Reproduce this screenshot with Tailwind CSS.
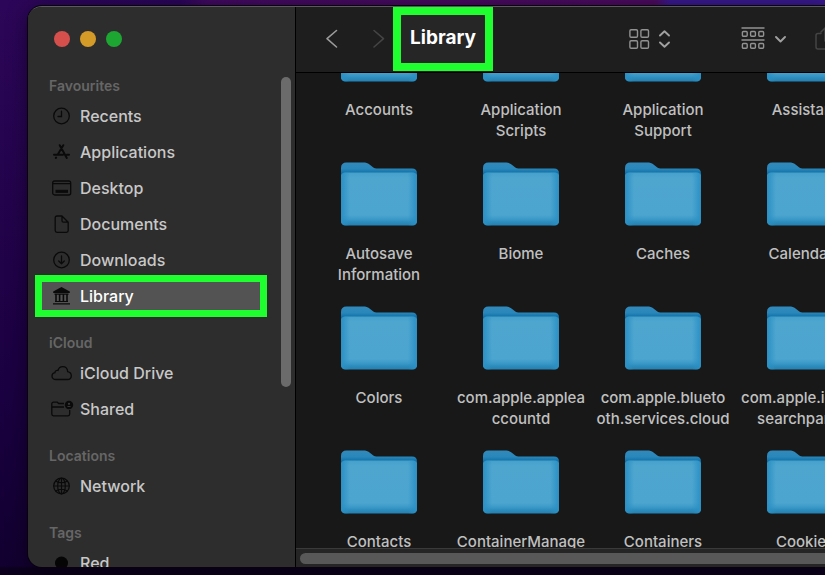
<!DOCTYPE html>
<html lang="en-GB">
<head>
<meta charset="utf-8">
<title>Library</title>
<script src="https://cdn.jsdelivr.net/npm/@tailwindcss/browser@4"></script>
</head>
<body class="h-screen overflow-hidden bg-[#0d0020] font-['Inter','Liberation_Sans',sans-serif]">
<svg class="absolute size-0" aria-hidden="true">
  <defs>
    <linearGradient id="back" x1="0" y1="0" x2="0" y2="1"><stop offset="0" stop-color="#3189bb"/><stop offset=".1" stop-color="#2a87ba"/><stop offset=".17" stop-color="#0f6fa8"/></linearGradient>
    <linearGradient id="front" x1="0" y1="0" x2="0" y2="1"><stop offset="0" stop-color="#45a0ca"/><stop offset=".1" stop-color="#4ea6cf"/><stop offset=".8" stop-color="#4ca5cf"/><stop offset=".88" stop-color="#3c9ac8"/><stop offset=".93" stop-color="#2e8dbd"/><stop offset="1" stop-color="#2380b0"/></linearGradient>
    <linearGradient id="sides" x1="0" y1="0" x2="1" y2="0"><stop offset="0" stop-color="#2a90c4"/><stop offset=".12" stop-color="#2a90c4" stop-opacity="0"/><stop offset=".88" stop-color="#2a90c4" stop-opacity="0"/><stop offset="1" stop-color="#2a90c4"/></linearGradient>
    <symbol id="folder" viewBox="0 0 76 64">
      <path fill="url(#back)" d="M0 6Q0 .5 5.500 .5H22C25 .5 26.500 1 28.500 2.500L32 5.200C33.500 6.300 34.500 6.500 36.500 6.500H71Q76 6.500 76 11.500V58Q76 63 71 63H5Q0 63 0 58Z"/>
      <path fill="url(#front)" d="M0 15Q0 10.500 5 10.500H71Q76 10.500 76 15V58.500Q76 63.500 71 63.500H5Q0 63.500 0 58.500Z"/>
      <path fill="url(#sides)" d="M0 15Q0 10.500 5 10.500H71Q76 10.500 76 15V58.500Q76 63.500 71 63.500H5Q0 63.500 0 58.500Z"/>
    </symbol>
  </defs>
</svg>
<div class="flex h-screen flex-col bg-[linear-gradient(to_right,#2c0658,#2a0558_180px,#40095f_210px,#4a0a5c_655px,#37188a_670px,#37188a)]">
<div class="flex min-h-0 flex-1 flex-col bg-[linear-gradient(to_bottom,transparent_6px,#1a0040_400px,#120030_566px,#0c001e_568px)] pt-[6px] pb-2 pl-7">
<div class="flex min-h-0 flex-1 overflow-hidden rounded-l-[14px] border-t border-[#5a5a5a] bg-[#181818] shadow-[0_0_0_1px_#0a0010,0_4px_20px_rgba(0,0,0,0.5)]">
  <aside class="flex w-[268px] shrink-0 flex-col border-r border-black bg-[#2d2d2d]">
    <div class="flex shrink-0 gap-[10px] pt-6 pl-[26px]">
      <button class="size-4 rounded-full bg-[#d5504c]" aria-label="Close"></button>
      <button class="size-4 rounded-full bg-[#d59b28]" aria-label="Minimise"></button>
      <button class="size-4 rounded-full bg-[#1ea633]" aria-label="Zoom"></button>
    </div>
    <div class="relative mt-[27px] min-h-0 flex-1">
      <nav class="flex h-full flex-col gap-[17px] overflow-hidden pr-[35px] pl-[14px] text-base font-medium text-[#c8c8c8]">
        <section>
          <h2 class="pl-[7px] text-sm leading-6 font-semibold text-[#666]">Favourites</h2>
          <ul>
            <li class="py-1"><a href="#" class="flex h-7 items-center gap-2 pl-2"><svg class="h-5 w-[22px]" viewBox="0 0 22 20" fill="none" stroke="#0a0a0a" stroke-width="1.300" stroke-linecap="round"><circle cx="11.500" cy="10" r="7.800"/><path d="M11.500 5.200V10.500H8"/></svg>Recents</a></li>
            <li class="py-1"><a href="#" class="flex h-7 items-center gap-2 pl-2"><svg class="h-5 w-[22px]" viewBox="0 0 22 20" fill="none" stroke="#0a0a0a" stroke-width="2" stroke-linecap="round"><path d="M9.700 3.200L16.800 16M13.300 3.200L7.600 12.700M4 12.700H13M17 12.700H19M6.100 15.500L5.800 16"/></svg>Applications</a></li>
            <li class="py-1"><a href="#" class="flex h-7 items-center gap-2 pl-2"><svg class="h-5 w-[22px]" viewBox="0 0 22 20" fill="none" stroke="#0a0a0a" stroke-width="1.300"><rect x="2.700" y="3" width="18" height="14" rx="2"/><path d="M3 5.700H20.500"/><rect x="6" y="12.300" width="11.500" height="2" fill="#0a0a0a" stroke-width="1"/></svg>Desktop</a></li>
            <li class="py-1"><a href="#" class="flex h-7 items-center gap-2 pl-2"><svg class="h-5 w-[22px]" viewBox="0 0 22 20" fill="none" stroke="#0a0a0a" stroke-width="1.300" stroke-linejoin="round"><path d="M7 2H12L18.200 8.200V16.500Q18.200 18.300 16.400 18.300H7Q5.200 18.300 5.200 16.500V3.800Q5.200 2 7 2ZM12 2V6.700Q12 8.200 13.500 8.200H18.200"/></svg>Documents</a></li>
            <li class="py-1"><a href="#" class="flex h-7 items-center gap-2 pl-2"><svg class="h-5 w-[22px]" viewBox="0 0 22 20" fill="none" stroke="#0a0a0a" stroke-width="1.300" stroke-linecap="round" stroke-linejoin="round"><circle cx="11.500" cy="10" r="7.800"/><path d="M11.500 6V13.700M8.700 11L11.500 13.800L14.300 11"/></svg>Downloads</a></li>
            <li class="py-1"><a href="#" aria-current="page" class="flex h-7 items-center gap-2 bg-[#535353] pl-2 text-white outline-[7px] outline-[#1fff30] outline-solid"><svg class="h-5 w-[22px]" viewBox="0 0 22 20" fill="none" stroke="#0a0a0a" stroke-width="1.200"><path fill="#0a0a0a" stroke="none" d="M11.500 1L19.800 5.500V7H3.200V5.500Z"/><path d="M4.500 8.200H18.500M5 15.500H18M3 17.800H20"/><path stroke-width="1.600" d="M6 8V15.500M9.600 8V15.500M13.400 8V15.500M17 8V15.500"/></svg>Library</a></li>
          </ul>
        </section>
        <section>
          <h2 class="pl-[7px] text-sm leading-6 font-semibold text-[#666]">iCloud</h2>
          <ul>
            <li class="py-1"><a href="#" class="flex h-7 items-center gap-2 pl-2"><svg class="h-5 w-[22px]" viewBox="0 0 22 20" fill="none" stroke="#0a0a0a" stroke-width="1.300"><path d="M6 16.500C3.500 16.500 2 15 2 13C2 11 3.300 9.900 5 9.700C5 8 6.500 7 8 7.500C8.700 5 10.500 3.700 12.700 3.700C15.500 3.700 17.500 5.800 17.700 8.700C20 9.200 21.300 10.700 21.300 12.700C21.300 15 19.600 16.500 17.500 16.500Z"/></svg>iCloud Drive</a></li>
            <li class="py-1"><a href="#" class="flex h-7 items-center gap-2 pl-2"><svg class="h-5 w-[22px] overflow-visible" viewBox="0 0 22 20" fill="none" stroke="#0a0a0a" stroke-width="1.300"><path d="M14 4.500H8.700L7.300 3.200H3.500Q1.800 3.200 1.800 4.800V15Q1.800 16.800 3.500 16.800H18Q19.700 16.800 19.700 15V11M2 8H14"/><circle cx="19" cy="6" r="4.200" fill="#0a0a0a" stroke="none"/><circle cx="19" cy="4.800" r="1.100" fill="#3a3a3a" stroke="none"/><path d="M16.800 8Q19 5.800 21.200 8Z" fill="#3a3a3a" stroke="none"/></svg>Shared</a></li>
          </ul>
        </section>
        <section>
          <h2 class="pl-[7px] text-sm leading-6 font-semibold text-[#666]">Locations</h2>
          <ul>
            <li class="py-1"><a href="#" class="flex h-7 items-center gap-2 pl-2"><svg class="h-5 w-[22px]" viewBox="0 0 22 20" fill="none" stroke="#0a0a0a" stroke-width="1.200"><circle cx="11.500" cy="10" r="7.800"/><ellipse cx="11.500" cy="10" rx="3.800" ry="7.800"/><path d="M11.500 2V18M3.700 10H19.300M5.500 5Q11.500 8.500 17.500 5M5.500 15Q11.500 11.500 17.500 15"/></svg>Network</a></li>
          </ul>
        </section>
        <section>
          <h2 class="pl-[7px] text-sm leading-6 font-semibold text-[#666]">Tags</h2>
          <ul>
            <li class="py-1"><a href="#" class="flex h-7 items-center gap-2 pl-2"><svg class="h-5 w-[22px]" viewBox="0 0 22 20"><circle cx="11.500" cy="10" r="6.500" fill="#050505"/></svg>Red</a></li>
          </ul>
        </section>
      </nav>
      <div class="absolute top-[3px] right-1 h-[310px] w-[10px] rounded-full bg-[#6b6b6b]"></div>
    </div>
  </aside>
  <main class="flex min-w-0 flex-1 flex-col">
    <header class="flex h-[66px] shrink-0 items-center overflow-hidden border-b border-black bg-[#1e1e1e] pb-[2px]">
      <button class="ml-[28px] shrink-0" aria-label="Back"><svg class="h-5 w-4" viewBox="0 0 16 20" fill="none" stroke="#9a9a9a" stroke-width="1.600" stroke-linecap="round" stroke-linejoin="round"><path d="M12.500 1.500L3 9.700L12.500 18"/></svg></button>
      <button class="ml-[30px] shrink-0" aria-label="Forward" disabled><svg class="h-5 w-4" viewBox="0 0 16 20" fill="none" stroke="#444" stroke-width="1.600" stroke-linecap="round" stroke-linejoin="round"><path d="M4 1.500L13.500 9.700L4 18"/></svg></button>
      <h1 class="ml-[7px] flex h-16 w-[100px] shrink-0 items-center justify-center border-8 border-[#1fff30] bg-[#262626] text-[19px] font-bold text-white">Library</h1>
      <button class="ml-[135px] flex shrink-0 items-center gap-2" aria-label="View as icons">
        <svg class="size-[22px]" viewBox="0 0 22 22" fill="none" stroke="#929292" stroke-width="1.400"><rect x="1.900" y="1.700" width="7.600" height="7.600" rx="1.200"/><rect x="12.900" y="1.700" width="7.600" height="7.600" rx="1.200"/><rect x="1.900" y="12.700" width="7.600" height="7.600" rx="1.200"/><rect x="12.900" y="12.700" width="7.600" height="7.600" rx="1.200"/></svg>
        <svg class="h-[22px] w-3" viewBox="0 0 12 22" fill="none" stroke="#a0a0a0" stroke-width="1.900" stroke-linecap="round" stroke-linejoin="round"><path d="M2 7.500L6.500 3.300L11 7.500M2 14.500L6.500 18.700L11 14.500"/></svg>
      </button>
      <button class="ml-[70px] flex shrink-0 items-center gap-[9px]" aria-label="Group items">
        <svg class="h-6 w-[26px]" viewBox="0 0 26 24" fill="none" stroke="#929292" stroke-width="1.400"><path d="M1.500 1H24.500M1.500 13H24.500"/><rect x="2.400" y="4.500" width="4.800" height="4.800" rx="1"/><rect x="10.600" y="4.500" width="4.800" height="4.800" rx="1"/><rect x="18.800" y="4.500" width="4.800" height="4.800" rx="1"/><rect x="2.400" y="16.500" width="4.800" height="4.800" rx="1"/><rect x="10.600" y="16.500" width="4.800" height="4.800" rx="1"/><rect x="18.800" y="16.500" width="4.800" height="4.800" rx="1"/></svg>
        <svg class="h-3 w-3" viewBox="0 0 12 12" fill="none" stroke="#a0a0a0" stroke-width="1.900" stroke-linecap="round" stroke-linejoin="round"><path d="M1 4L5.500 8.500L10 4"/></svg>
      </button>
      <button class="ml-[28px] shrink-0" aria-label="Share"><svg class="h-6 w-5" viewBox="0 0 20 24" fill="none" stroke="#444" stroke-width="1.500" stroke-linecap="round"><path d="M6 6.500H3Q1 6.500 1 8.500V20Q1 22 3 22H17Q19 22 19 20V8.500Q19 6.500 17 6.500H14M10 14V1M6 5L10 1L14 5"/></svg></button>
    </header>
    <div class="min-h-0 flex-1 overflow-hidden">
      <ul class="-mt-[55px] ml-3 grid auto-rows-[144px] grid-cols-[repeat(4,142px)] text-center text-[15px] leading-[21px] font-medium text-[#c0c0c0]">
        <li class="flex flex-col items-center gap-[17px]"><svg class="h-16 w-[76px] shrink-0"><use href="#folder"/></svg><span>Accounts</span></li>
        <li class="flex flex-col items-center gap-[17px]"><svg class="h-16 w-[76px] shrink-0"><use href="#folder"/></svg><span>Application<br>Scripts</span></li>
        <li class="flex flex-col items-center gap-[17px]"><svg class="h-16 w-[76px] shrink-0"><use href="#folder"/></svg><span>Application<br>Support</span></li>
        <li class="flex flex-col items-center gap-[17px]"><svg class="h-16 w-[76px] shrink-0"><use href="#folder"/></svg><span>Assistant</span></li>
        <li class="flex flex-col items-center gap-[17px]"><svg class="h-16 w-[76px] shrink-0"><use href="#folder"/></svg><span>Autosave<br>Information</span></li>
        <li class="flex flex-col items-center gap-[17px]"><svg class="h-16 w-[76px] shrink-0"><use href="#folder"/></svg><span>Biome</span></li>
        <li class="flex flex-col items-center gap-[17px]"><svg class="h-16 w-[76px] shrink-0"><use href="#folder"/></svg><span>Caches</span></li>
        <li class="flex flex-col items-center gap-[17px]"><svg class="h-16 w-[76px] shrink-0"><use href="#folder"/></svg><span>Calendars</span></li>
        <li class="flex flex-col items-center gap-[17px]"><svg class="h-16 w-[76px] shrink-0"><use href="#folder"/></svg><span>Colors</span></li>
        <li class="flex flex-col items-center gap-[17px]"><svg class="h-16 w-[76px] shrink-0"><use href="#folder"/></svg><span>com.apple.applea<br>ccountd</span></li>
        <li class="flex flex-col items-center gap-[17px]"><svg class="h-16 w-[76px] shrink-0"><use href="#folder"/></svg><span>com.apple.blueto<br>oth.services.cloud</span></li>
        <li class="flex flex-col items-center gap-[17px]"><svg class="h-16 w-[76px] shrink-0"><use href="#folder"/></svg><span>com.apple.icloud.<br>searchpartyd</span></li>
        <li class="flex flex-col items-center gap-[17px]"><svg class="h-16 w-[76px] shrink-0"><use href="#folder"/></svg><span>Contacts</span></li>
        <li class="flex flex-col items-center gap-[17px]"><svg class="h-16 w-[76px] shrink-0"><use href="#folder"/></svg><span>ContainerManage</span></li>
        <li class="flex flex-col items-center gap-[17px]"><svg class="h-16 w-[76px] shrink-0"><use href="#folder"/></svg><span>Containers</span></li>
        <li class="flex flex-col items-center gap-[17px]"><svg class="h-16 w-[76px] shrink-0"><use href="#folder"/></svg><span>Cookies</span></li>
      </ul>
    </div>
    <div class="h-[19px] shrink-0 border-t border-[#3a3a3a] bg-[#252525] pt-1 pl-1"><div class="h-[11px] rounded-l-full bg-[#585858]"></div></div>
  </main>
</div>
</div>
</div>
</body>
</html>
